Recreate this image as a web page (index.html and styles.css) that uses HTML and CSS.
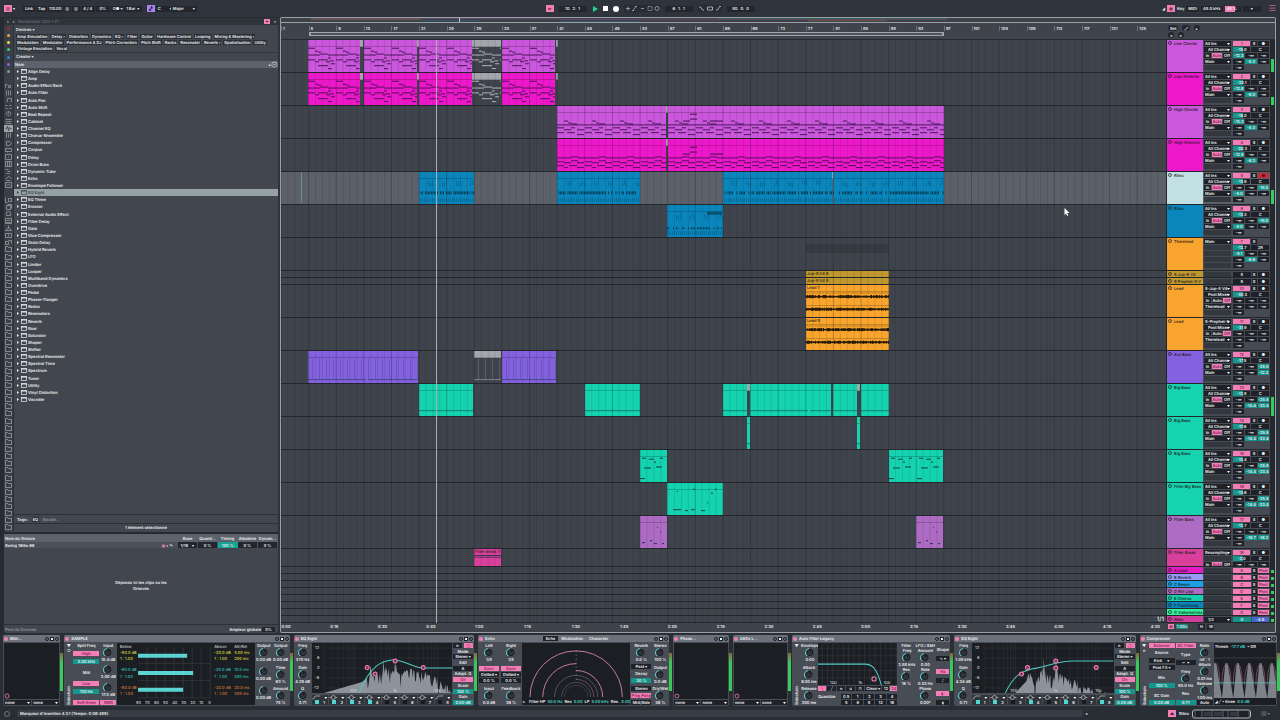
FILE: index.html
```html
<!DOCTYPE html>
<html lang="fr">
<head>
<meta charset="utf-8">
<title>Live Set</title>
<link rel="stylesheet" href="styles.css">
</head>
<body>
<header class="topbar">
  <div class="bar-group start-group">
    <button class="sq pink" aria-label="Panneaux">▥</button><span class="gap-s">▾</span>
    <button class="tb">Link</button><button class="tb">Tap</button>
    <input class="tb w14" value="110.00" aria-label="Tempo">
    <button class="tb">▥</button><button class="tb">▥</button>
    <button class="tb w14">4 / 4</button>
    <button class="tb w14">0%</button>
    <button class="tb w10">O● ▾</button>
    <button class="tb w18">1 Bar &nbsp;▾</button>
    <button class="sq violet gap-m" aria-label="Gamme">▞</button>
    <button class="tb w14 start">C &emsp;&emsp;▾</button>
    <button class="tb w26 start">Major &emsp;&emsp;▾</button>
  </div>
  <div class="bar-group center">
    <button class="sq pink" aria-label="Suivre">◂▪</button>
    <input class="tb w28" value="10.  2.  1" aria-label="Position">
    <button class="icon-btn" aria-label="Lecture"><svg width="6" height="6"><path d="M1 0L6 3L1 6Z" fill="#1ed38c"/></svg></button>
    <button class="icon-btn" aria-label="Stop"><svg width="5" height="5"><rect width="5" height="5" fill="#fff"/></svg></button>
    <button class="icon-btn" aria-label="Enregistrer"><svg width="6" height="6"><circle cx="3" cy="3" r="3" fill="#fff"/></svg></button>
    <span class="icons"><svg width="36" height="7" viewBox="0 0 36 7" fill="none" stroke="#a9adb3" stroke-width=".8"><path d="M2 3.500h4M4 1.500v4M9 5.500l3-4M8 5.500h2M11 1.500h2M17 3.500h3"/><path d="M24 1.500h4v4h-4z" stroke-dasharray="1.500 .8"/><circle cx="33" cy="3.500" r="2"/></svg></span>
    <input class="tb w28" value="6.  1.  1" aria-label="Début de boucle">
    <span class="icons"><svg width="24" height="7" viewBox="0 0 24 7" fill="none" stroke="#c8cbd0" stroke-width=".8"><path d="M1 2h1.500l2 3H6M9.500 2h5v3h-5zM18 5h1.500l2-3.500H23"/></svg></span>
    <input class="tb w28" value="80.  0.  0" aria-label="Longueur de boucle">
  </div>
  <div class="bar-group end">
    <span>◢</span><button class="sq pink" aria-label="Clavier">▦</button><button class="plain">Key</button>
    <button class="tb">MIDI</button><button class="tb">48.0 kHz</button>
    <button class="tb cpu">48 % &nbsp;</button><button class="tb w18">▾</button>
    <button class="plain menu" aria-label="Menu">☰</button>
  </div>
</header>
<main class="workspace">
  <aside class="sidebar">
    <section class="browser">
      <div class="search"><button class="plain">‹</button><button class="plain">›</button><input type="text" placeholder="Rechercher (Ctrl + F)" aria-label="Rechercher"><button class="sq pink small" aria-label="Filtre">✦</button><button class="plain">▪</button></div>
      <div class="browser-body">
        <nav class="places" id="places" aria-label="Collections"></nav>
        <div class="browser-main">
          <div class="filters">
            <h2>Devices ▾</h2>
            <div class="tags" id="tags"></div>
            <h2 class="creator">Creator ▾</h2>
          </div>
          <div class="list-head"><span>Nom</span><span>▴ ⊖</span></div>
          <ul class="devices-list" id="list"></ul>
          <div class="tagline"><span>Tags :</span><button class="tag">EQ</button><span class="dim">Ajouter...</span></div>
          <div class="selected">1 élément sélectionné</div>
        </div>
      </div>
    </section>
    <section class="groove">
      <table>
        <thead><tr><th>Nom du Groove</th><th class="c-ic"></th><th class="c-md">Base</th><th class="c-md">Quanti...</th><th class="c-md">Timing</th><th class="c-md">Aléatoire</th><th class="c-md">Dynam...</th></tr></thead>
        <tbody><tr><td>Swing 16ths 66</td><td><b class="hot">▣</b> ▪ ↷</td><td class="dark">1/16 &nbsp; &nbsp;▾</td><td class="dark">0 %</td><td class="teal">100 %</td><td class="dark">0 %</td><td class="dark">0 %</td></tr></tbody>
      </table>
      <p>Déposez ici les clips ou les<br>Grooves</p>
      <div class="groove-foot"><span class="dim">Pool de Grooves</span><label>Ampleur globale <input value="0%"></label></div>
    </section>
  </aside>
  <section class="arrangement">
    <div class="overview" id="overview"></div>
    <div class="arr-grid">
      <div class="ruler" id="ruler"></div>
      <div class="panel-head"><div><button class="tb">Set</button><button class="tb">⤢</button><button class="tb">▴</button></div><div><button class="tb">◂</button><button class="tb">▸</button></div></div>
      <div class="lanes" id="lanes"></div>
      <div class="tracks" id="tracks"></div>
      <div class="times" id="times"></div>
      <div class="panel-foot"><button class="sq pink small" aria-label="Mode">⊞</button><input class="num teal" value="1.00x" aria-label="Zoom"><span></span><button class="tb">H</button><button class="tb">W</button></div>
    </div>
  </section>
</main>
<section class="rack" id="rack"></section>
<footer class="status">
  <span class="ring"></span><span class="message">Marqueur d'insertion 4.3.1 (Tempo: 0:06:489)</span>
  <span class="tri">▸</span><button class="sq pink" aria-label="Piste">▲</button><span class="trk">Ritou</span>
  <svg class="minimap" width="66" height="10" viewBox="0 0 66 10"><rect x=".5" y="1" width="58" height="8" rx="2" fill="#1d2026" stroke="#b5b9be"/><path d="M3 2v6M10 2v6M20 2v6M31 2v6M36 2v6M46 2v6M57 2v6" stroke="#5d636c"/><path d="M12 3h7v4h-7zM22 3h8v4h-8zM38 3h7v4h-7z" fill="#343941"/></svg>
  <span class="dim cpu-bars">|||| ▾</span>
</footer>
<script src="app.js"></script>
</body>
</html>
```

FILE: styles.css
```css
* { box-sizing: border-box; }
body {
  margin: 0; min-height: 100vh; display: flex; flex-direction: column;
  background: #2f333b; color: #eceef0; overflow-x: hidden;
  font: 600 4px/5px Inter, "DejaVu Sans", sans-serif;
  text-rendering: geometricPrecision;
}
button, input, select { font: inherit; color: inherit; border: 0; padding: 0; margin: 0; background: none; border-radius: 0; min-width: 0; text-rendering: inherit; }
select { appearance: none; }
h2, p, ul { margin: 0; padding: 0; font: inherit; }
svg { display: block; }
.dim { color: #8d929a; }

.topbar { height: 17px; display: grid; grid-template-columns: 1fr auto 1fr; align-items: center; padding: 0 4px; }
.bar-group { display: flex; align-items: center; gap: 2px; white-space: pre; }
.bar-group.start-group { gap: 1px; }
.bar-group.center { margin-left: 20px; gap: 5px; }
.bar-group.end { justify-content: flex-end; }
.tb { background: #23262d; height: 6px; padding: 0 2px; text-align: center; line-height: 6px; }
input.tb { padding: 0; }
.start { text-align: left; }
.w10 { width: 12px; } .w14 { width: 14px; } .w18 { width: 18px; } .w26 { width: 26px; } .w28 { width: 28px; }
.sq { width: 8px; height: 7px; line-height: 7px; text-align: center; color: #4a1c36; }
.small { width: 6px; height: 5px; line-height: 5px; }
.pink { background: #f47fb6; color: #30202b; }
.violet { background: #a884ee; color: #2a1d4a; }
.gap-s { width: 9px; } .gap-m { margin-left: 4px; }
.icons { background: #282c33; }
.cpu { background: linear-gradient(90deg, #f47fb6 60%, #23262d 60%); }
.menu { color: #c86496; font-size: 8px; margin-left: 6px; }

.workspace { flex: 1; display: grid; grid-template-columns: 278px minmax(0, 1fr); gap: 2px; padding: 0 4px 0 0; }
.sidebar { display: flex; flex-direction: column; padding: 1px 0 0 4px; gap: 2px; background: #262a31; }
.browser { flex: 1; background: #42474f; border-radius: 2px; display: flex; flex-direction: column; }
.search { height: 7px; display: flex; align-items: center; gap: 4px; padding: 0 2px 0 3px; background: #2f343b; }
.search input { flex: 1; }
.search input::placeholder { color: #666c75; }
.browser-body { flex: 1; display: flex; }
.places { width: 10px; height: 506px; display: grid; grid-auto-rows: 1fr; justify-items: center; align-items: center; background: #3a3f47; border-right: 1px solid #2b2f36; }
.places button { width: 9px; height: 7px; display: grid; place-items: center; color: #a3a8ae; }
.places .on { background: #99a5a6; color: #22272c; }
.dot { width: 3px; height: 3px; border-radius: 50%; }
.browser-main { flex: 1; display: flex; flex-direction: column; }
.filters { height: 36px; padding: 2px 1px 0 2px; }
.filters .creator { border-top: 1px solid #30353c; margin-top: 1px; padding-top: 1px; }
.tags { display: grid; gap: 1px; padding-top: 2px; }
.tags div { display: flex; gap: 2px; }
.tag { background: #2b2f36; height: 5px; padding: 0 1px; line-height: 5px; white-space: nowrap; }
.list-head { height: 7px; display: flex; justify-content: space-between; background: #5d636d; padding: 1px; }
.devices-list { list-style: none; height: 335px; display: grid; grid-auto-rows: 1fr; }
.devices-list li { display: flex; align-items: center; gap: 1px; padding-left: 3px; }
.devices-list .sel { background: #95a1a2; color: #414a50; }
.tagline { margin-top: auto; height: 9px; display: flex; align-items: center; gap: 3px; border-top: 1px solid #2c3037; padding-left: 3px; }
.selected { height: 9px; border-top: 1px solid #2c3037; text-align: center; line-height: 8px; }
.groove { height: 99px; background: #42474f; border-radius: 2px; display: flex; flex-direction: column; }
.groove table { width: 100%; border-collapse: collapse; table-layout: fixed; }
.groove th { background: #5d636d; height: 8px; text-align: left; padding: 0 1px; font-weight: inherit; }
.groove td { height: 6px; padding: 0 1px; background: #4b5059; }
.groove .c-ic { width: 17px; } .groove .c-md { width: 20px; text-align: center; }
.groove td.dark { background: #23272d; text-align: center; border-right: 1px solid #4b5059; }
.groove td.teal { background: #16a394; text-align: center; }
.hot { color: #f47fb6; }
.groove p { margin: auto; text-align: center; line-height: 6px; }
.groove-foot { height: 9px; display: flex; justify-content: space-between; align-items: center; padding: 0 3px 0 1px; border-top: 1px solid #2c3037; }
.groove-foot input { width: 13px; background: #23272d; text-align: center; }

.arrangement { border: 1px solid #9a9fa6; border-top: 0; border-radius: 2px; background: #3d4249; min-width: 0; }
.overview { height: 6px; border: 1px solid #9a9fa6; border-width: 1px 0; background: #3d4249; position: relative; }
.overview i { position: absolute; height: 1px; opacity: .25; }
.overview b { position: absolute; left: 0; width: 18%; height: 4px; border-right: 1px solid #cfd2d6; }
.arr-grid { display: grid; grid-template-columns: minmax(0, 1fr) 109px; }
.ruler { height: 17px; position: relative; background: #3f444c; border-bottom: 1px solid #272a30; }
.ruler span { position: absolute; top: 3px; padding-left: 1px; border-left: 1px solid #6d727a; }
.loop { position: absolute; top: 9px; height: 4px; border: 1px solid #a0a5ab; border-width: 1px 2px; background: #50555d; }
.panel-head { padding: 2px 0 0; height: 17px; display: grid; gap: 1px; align-content: start; background: #3f444c; border-bottom: 1px solid #272a30; }
.panel-head div { display: flex; gap: 4px; padding-left: 2px; }
.panel-head .tb { border-radius: 3px; line-height: 5px; }
.lanes { position: relative; overflow: hidden; background: #3f444c; }
.lane { position: relative; border-bottom: 1px solid #23262b; }
.lane.sel { background: #5b6069; }
.clip { position: absolute; top: 0; height: 100%; overflow: hidden; }
.clip::before { content: ""; position: absolute; top: 0; left: 0; right: 0; height: 6px; background: var(--head, transparent); border-bottom: 1px solid #00000030; }
.clip svg { width: 100%; height: 100%; position: absolute; }
.clip span { position: relative; display: block; padding-left: 1px; color: #332813; white-space: nowrap; font-weight: 500; }
.clip.flat::before { display: none; }
.grid-lines { position: absolute; inset: 0; width: 100%; height: 100%; pointer-events: none; }
.playhead { position: absolute; top: 0; bottom: 0; width: 1px; background: #a9adb2; }
.insert { position: absolute; width: 1px; height: 31px; background: #6d9ba3; }
.ghost { position: absolute; height: 9px; background: #363a41; }
.pointer { position: absolute; }
.ratio { position: absolute; right: 2px; bottom: 1px; font-size: 6px; font-weight: 500; }
.h33 { height: 33px; } .h18 { height: 18px; } .h7 { height: 7px; }
.track { display: grid; grid-template-columns: 37px 28px minmax(0, 1fr) 5px; border-bottom: 1px solid #23262b; background: #464b53; overflow: hidden; }
.track.sel { background: #5b6069; }
.track-name { padding: 1px; color: #1f1b24; white-space: nowrap; overflow: hidden; display: flex; gap: 2px; font-weight: 500; border-left: 1px solid #23262b; }
.fold { width: 4px; height: 4px; border: 1px solid currentColor; border-radius: 50%; flex: none; opacity: .7; }
.io { display: grid; grid-auto-rows: 5px; gap: 1px; padding: 1px 0 0 1px; overflow: hidden; }
.io select, .io i, .plug-foot select { background: #1e2127 url("data:image/svg+xml,%3Csvg xmlns='http://www.w3.org/2000/svg' width='4' height='4'%3E%3Cpath d='M0 1h3L1.500 3z' fill='%23fff'/%3E%3C/svg%3E") right center no-repeat; height: 5px; line-height: 5px; padding-left: 1px; width: 100%; overflow: hidden; }
.io i { background: #33373e; }
.io .sub { padding-left: 4px; }
.mon { display: grid; grid-template-columns: 7px 10px 8px; gap: 1px; }
.mon button { background: #1e2127; height: 5px; line-height: 5px; }
.mon .pink, .cell.pink { background: #f47fb6; color: #7c2a58; }
.mix { display: grid; grid-template-columns: repeat(6, 1fr); grid-auto-rows: 5px; gap: 1px; padding: 1px 1px 0 2px; }
.cell { background: #1e2127; height: 5px; line-height: 5px; text-align: center; grid-column: span 2; width: 100%; }
.cell.s3 { grid-column: span 3; } .cell.s1 { grid-column: span 1; }
.cell.t { background: linear-gradient(90deg, #14968d 60%, #1e2127 60%); }
.cell.tt { background: #14968d; }
.cell.rec { background: #c42b38; color: #521016; }
.cell.blue { background: #4767c9; }
.meter { background: #25292f; display: flex; align-items: flex-end; }
.meter i { width: 3px; background: #32cd5d; margin-left: 1px; }
.times { height: 8px; position: relative; background: #3f444c; }
.times span { position: absolute; top: 1px; transform: translateX(-50%); }
.panel-foot { display: grid; grid-template-columns: 6px 12px 6px 7px 7px; gap: 2px; padding: 1px 2px; }
.num { background: #1e2127; width: 100%; height: 5px; text-align: center; }
.num.teal { background: #16877f; }

.rack { display: flex; gap: 4px; padding: 2px 3px 1px 3px; height: 74px; background: #292d34; }
.device { position: relative; flex-grow: 1; flex-shrink: 1; min-width: 0; background: #474c55; border-radius: 2px; display: flex; flex-direction: column; }
.device > header { height: 7px; display: flex; align-items: center; gap: 2px; padding: 0 1px; background: #6b717b; border-radius: 2px 2px 0 0; white-space: nowrap; }
.on-dot { width: 4px; height: 4px; border-radius: 50%; background: #f47fb6; }
.header-icons { margin-left: auto; display: flex; gap: 1px; }
.header-icons i { width: 4px; height: 4px; border: 1px solid #1d2025; border-radius: 50%; }
.header-icons i:nth-child(2) { background: #f2f2f2; border-radius: 0; }
.dev-meter { position: absolute; right: -3px; top: 18px; height: 38px; width: 3px; background: linear-gradient(#8a6540, #3ac85c 25%); }
.body { flex: 1; display: flex; min-height: 0; gap: 1px; padding: 1px; }
.col { display: flex; flex-direction: column; align-items: center; flex: none; white-space: nowrap; }
.col.between { justify-content: space-between; }
.w8 { width: 7px; } .w16 { width: 16px; } .w24 { width: 26px; } .w22 { width: 20px; } .w12 { width: 13px; }
.knob { display: grid; justify-items: center; text-align: center; white-space: nowrap; width: 100%; }
.screen { background: #1b1e22; flex: 1; min-width: 0; display: flex; flex-direction: column; }
.screen svg { width: 100%; flex: 1; min-height: 0; }
.screen text { font: 500 4px Inter, sans-serif; fill: #c7cacf; }
.bt { background: #1e2127; width: 100%; height: 5px; line-height: 5px; text-align: center; white-space: nowrap; }
.bt.pink { background: #f47fb6; color: #8a2860; }
.bt.teal { background: #14968d; }
.bands { display: grid; grid-template-columns: repeat(8, 1fr); gap: 1px; background: #474c55; padding-top: 2px; }
.band { background: #30343b; display: grid; justify-items: center; }
.band label { display: flex; gap: 4px; }
.band input, .tick { appearance: none; width: 4px; height: 4px; background: #17191d; }
.band input:checked, .tick:checked { background: #4ed7d1; }
.plug-foot { display: grid; grid-template-columns: 1fr 1fr; gap: 1px; }
.plug { flex-direction: column; }
.stack { display: flex; flex-direction: column; flex: 1; min-width: 0; gap: 1px; }
.side { writing-mode: vertical-rl; rotate: 180deg; margin-top: auto; }
.quant { display: grid; grid-template-columns: 22px repeat(5, 1fr); gap: 1px; margin-top: 2px; }
.modes { display: grid; grid-template-columns: repeat(5, 1fr) 16px 7px 7px; gap: 1px; }
.tabs { margin-left: 46px; display: flex; }
.tabs button { padding: 0 3px; height: 5px; }
.tabs .act { background: #1e2127; }
.two { display: grid; grid-template-columns: 1fr 1fr; gap: 1px 2px; }
.full { width: 100%; }
.pair { width: 42px; }
.filterline { display: flex; gap: 2px; padding: 1px; white-space: nowrap; overflow: hidden; }
.filterline em { color: #48d5cd; font-style: normal; }

.status { height: 13px; display: flex; align-items: center; gap: 3px; padding: 0 5px 0 4px; background: #292d34; }
.ring { width: 6px; height: 6px; border: 1px solid #71767e; border-radius: 50%; margin-right: 4px; }
.message { background: #383d45; flex: 1; padding: 1px 3px; border-radius: 2px; }
.tri { width: 79px; }
.trk { width: 10px; }
.cpu-bars { width: 14px; }
```

FILE: app.js
```js
const $ = id => document.getElementById(id);
let seed = 7;
const rnd = () => (seed = (seed * 16807) % 2147483647) / 2147483647;
const W = 885;
const pct = v => (v / W * 100).toFixed(3) + '%';

/* ---- browser ---- */
const tagRows = [
  ['Amp Simulation', 'Delay ›', 'Distortion', 'Dynamics', 'EQ ›', 'Filter', 'Guitar', 'Hardware Control', 'Looping', 'Mixing & Mastering ›'],
  ['Modulation', 'Modulator', 'Performance & DJ', 'Pitch Correction', 'Pitch Shift', 'Racks', 'Resonator', 'Reverb ›', 'Spatialisation', 'Utility'],
  ['Vintage Emulation', 'Vocal']
];
$('tags').innerHTML = tagRows.map(row => `<div>${row.map(t => `<button class="tag">${t}</button>`).join('')}</div>`).join('');
const names = 'Align Delay,Amp,Audio Effect Rack,Auto Filter,Auto Pan,Auto Shift,Beat Repeat,Cabinet,Channel EQ,Chorus-Ensemble,Compressor,Corpus,Delay,Drum Buss,Dynamic Tube,Echo,Envelope Follower,EQ Eight,EQ Three,Erosion,External Audio Effect,Filter Delay,Gate,Glue Compressor,Grain Delay,Hybrid Reverb,LFO,Limiter,Looper,Multiband Dynamics,Overdrive,Pedal,Phaser-Flanger,Redux,Resonators,Reverb,Roar,Saturator,Shaper,Shifter,Spectral Resonator,Spectral Time,Spectrum,Tuner,Utility,Vinyl Distortion,Vocoder'.split(',');
$('list').innerHTML = names.map(n => `<li class="${n === 'EQ Eight' ? 'sel' : ''}"><svg width="10" height="5" viewBox="0 0 10 5"><path d="M0 1l2 1.500L0 4z" fill="currentColor"/><rect x="4.400" y=".5" width="5" height="4" fill="none" stroke="currentColor" stroke-width=".7"/><path d="M4 1h6" stroke="currentColor"/></svg>${n}</li>`).join('');
const dots = ['#a3293c', '#f0a137', '#eee34f', '#2fd07d', '#2b86cf', '#8a5fe0', '#8d929a'];
const glyphs = ['M0 4V1h2M3 2h2v2H3z', 'M1 0v5M3 0v5M5 0v5', 'M1 4h1V1h4v3H5', 'M0 1h2M4 1h2M0 4h2M4 4h2', 'M3 0a2 2 0 1 0 .1 0M3 0v2', 'M0 1h6M0 3h6M0 5h6', 'M0 3h1l1-2 1 4 1-3 1 1h1', 'M1 0v5M3 1v4M5 0v5', 'M1 1h3l2 2-2 2H1z', 'M0 1h6v3H0zM2 4v1', 'M0 0h6v5H0zM3 2v1', 'M0 0h6v5H0zM2 0v5M4 0v5', 'M0 1h3M2 3h3M1 5h3', 'M0 4l3-3 3 2M1 5h4', 'M0 0h6v5H0zM1 3l2-1 2 1', '', 'M0 0v5h2M3 1h3v3H3z', 'M1 1h4v4H1zM2 0h4v4', 'M1 4a2 2 0 0 1 0-2 2 2 0 0 1 4 0v2z', 'M0 0h6v5H0zM1 2h4M1 4h4', 'M3 0v3M0 5l3-3 3 3z', 'M0 1h6v4H0zM3 2v2', 'M0 5V2h3v3zM3 1h3v3'];
$('places').innerHTML = Array.from({ length: 71 }, (_, i) => {
  if (i < 7) return `<span class="dot" style="background:${dots[i]}"></span>`;
  if (i === 7 || i === 23) return '<span></span>';
  const d = i < 31 ? glyphs[i - 8] || '' : 'M0 5V0h2l1 1h3v4z';
  return `<button class="${i === 14 ? 'on' : ''}" aria-label="Emplacement ${i - 7}"><svg width="7" height="6" viewBox="-.5 -.5 7 6"><path d="${d}" fill="none" stroke="currentColor" stroke-width=".7"/></svg></button>`;
}).join('');

/* ---- rulers ---- */
const bar = b => (b - 1) * 6.905;
let r = '';
for (let b = 1; b < 128; b += 4) r += `<span style="left:${pct(bar(b))}">${b}</span>`;
$('ruler').innerHTML = r + `<div class="loop" style="left:${pct(bar(5))};width:${pct(bar(93))}"></div>`;
let t = '';
for (let i = 0; i < 19; i++) t += `<span style="left:${pct(5 + i * 48.3)}">${Math.floor(i / 4)}:${String(i % 4 * 15).padStart(2, '0')}</span>`;
$('times').innerHTML = t;
$('overview').innerHTML = '<b></b>' + [[3, 28, '#c860d8'], [28, 67, '#d850c0'], [14, 20, '#1288bd'], [28, 36, '#1288bd'], [44, 67, '#1fbf9d'], [3, 14, '#e0aa50'], [53, 61, '#f0a137']].map((o, i) => `<i style="left:${o[0]}%;width:${o[1] - o[0]}%;top:${i % 4}px;background:${o[2]}"></i>`).join('');

/* ---- tracks: name, colour, row class, mixer data ---- */
const P = '#ca57dc', M = '#ee18cb', B = '#0b86bd', O = '#f8a42d', G = '#14d3ae', V = '#ae6bc3', Y = '#c0982d';
const N = '-∞';
const tracks = [
  ['Low Chords', P, 33, '1', '-15.0', ['-12.3', N, N, N, '-5.3', N], 13],
  ['Low Stretchs', M, 33, '2', '-20.1', ['-12.8', N, N, N, '-6.0', N], 8],
  ['High Chords', P, 33, '3', '-15.0', ['-12.3', N, N, N, '-5.3', N], 0],
  ['High Stretchs', M, 33, '4', '-20.3', ['-12.8', N, N, N, '-6.3', N], 0],
  ['Ritou', '#c2e0e3', 33, '5', '-13.9', [N, N, '-18.0', '-8.0', N, N], 14],
  ['Ritou', B, 33, '6', '-13.3', [N, N, '-18.0', '-8.0', N, N], 0],
  ['Therelead', O, 33, '7', '-12.7', ['-9.1', N, N, N, '-6.6', N], 0],
  ['8 Jup-8 V4', Y, 7, '8'], ['9 Prophet-5 V', Y, 7, '9'],
  ['Lead', O, 33, '10', '-30.3', [N, N, N, N, N, N], 0, '8-Jup-8 V4'],
  ['Lead', O, 33, '11', '-31.9', [N, N, N, N, N, N], 0, '9-Prophet-5'],
  ['Arp Bass', '#8461de', 33, '12', '-17.5', [N, N, '-25.8', N, N, '-12.2'], 0],
  ['Big Bass', G, 33, '13', '-12.8', [N, N, '-25.8', N, '-14.4', '-23.4'], 19],
  ['Big Bass', G, 33, '14', '-17.6', [N, N, '-25.8', N, '-14.4', '-23.4'], 0],
  ['Big Bass', G, 33, '15', '-13.4', [N, N, '-25.8', N, '-14.4', '-23.4'], 0],
  ['Filter Big Bass', G, 33, '16', '-13.6', [N, N, '-25.8', N, '-14.4', '-23.4'], 0],
  ['Filter Bass', V, 33, '17', '-12.7', [N, N, N, N, '-16.7', '-16.2'], 0],
  ['Filter Break', '#d8409b', 18, '18', '-2.0', [N, N, N], 0, 'Resampling'],
  ['A Lead', '#e51bc6', 7, 'A'], ['B Reverb', '#989af6', 7, 'B'], ['C Reson', '#1ba0e6', 7, 'C'], ['D RVI Lisp', V, 7, 'D'],
  ['E Chorus', G, 7, 'E'], ['F FrontComp', B, 7, 'F'], ['G ValhallaVinta', '#31f49a', 7, 'G'], ['Main', '#cf3f99', 7, 'M']
];
const sel = (v, c = '') => `<select class="${c}" aria-label="${v}"><option>${v}</option></select>`;
const inp = (v, c) => `<input class="cell ${c}" value="${v}" aria-label="Valeur ${v}">`;
$('tracks').innerHTML = tracks.map((k, i) => {
  const [name, col, h, num, vol, sends, lvl, src] = k;
  let io = '', mix = '';
  if (h === 7) {
    const ret = /[A-G]/.test(num);
    if (num === 'M') { io = sel('1/2', 'sub'); mix = inp('0', 's3 tt') + inp('-4.9', 's3 blue'); }
    else { io = '<i></i>'; mix = `<button class="cell s3 ${ret ? 'pink' : ''}">${num}</button><button class="cell s1">S</button><button class="cell ${ret ? 'pink' : ''}">${ret ? 'Post' : '●'}</button>`; }
  } else {
    const group = num === '7', lead = name === 'Lead';
    const mon = `<div class="mon"><button>In</button><button class="${lead ? '' : 'pink'}">Auto</button><button class="${lead ? 'pink' : ''}">Off</button></div>`;
    io = group ? sel('Main') + '<i></i><i></i><i></i><i></i>' : sel(src || 'All Ins') + (h === 18 ? '<i></i>' : sel(lead ? 'Post Mixer' : 'All Channe', 'sub')) + mon + sel(lead ? 'Therelead' : 'Main') + '<i></i>';
    mix = `<button class="cell s3 pink">${num}</button><button class="cell s1">S</button>` + (group ? '<span></span><span></span>' : `<button class="cell ${i === 4 ? 'rec' : ''}">●</button>`) + inp(vol, 's3 t') + inp(group ? '2R' : 'C', 's3') + sends.map(s => inp(s, s === N ? '' : 'tt')).join('') + (h === 33 ? inp(N, '') : '');
  }
  return `<div class="track h${h} ${i === 4 ? 'sel' : ''}"><div class="track-name" style="background:${col}"><i class="fold"></i>${name}</div><div class="io">${io}</div><div class="mix">${mix}</div><div class="meter"><i style="height:${h === 7 && i > 17 ? 3 : lvl || 0}px"></i></div></div>`;
}).join('');

/* ---- clips ---- */
const pats = {
  low: [28, [[0, 8, 7], [7, 11, 3], [10, 12, 3], [12, 14, 8], [0, 15, 12], [20, 15, 8], [0, 20, 7], [10, 20, 10], [20, 18, 3], [22, 21, 4], [7, 22, 4], [18, 22, 4], [10, 26, 10], [23, 24, 4], [20, 29, 4]]],
  high: [28, [[0, 19, 28], [7, 15, 4], [11, 17, 3], [14, 18, 6], [0, 22, 7], [7, 24, 7], [0, 27, 7], [14, 22, 4], [20, 24, 7], [10, 27, 8], [20, 29, 7]]],
  high2: [28, [[0, 19, 14], [14, 18, 7], [21, 19, 7], [0, 23, 7], [7, 24, 7], [14, 22, 7], [0, 27, 7], [7, 29, 4], [12, 27, 8], [20, 24, 7], [20, 29, 7]]],
  bass: [28, [[2, 8, 4], [9, 9, 5], [14, 12, 2], [20, 8, 3], [16, 17, 6], [4, 18, 7], [0, 29, 5]]],
  fbig: [56, [[6, 27, 8], [18, 28, 3], [24, 27, 4], [34, 28, 4], [40, 20, 1], [44, 10, 2], [48, 6, 2], [26, 6, 2], [10, 8, 1]]],
  line: [60, [[0, 27, 58]]],
  comb: [60, [[0, 29, 58]]],
  fbass: [28, [[2, 27, 3], [10, 25, 2], [14, 28, 3], [17, 11, 1], [20, 16, 1], [22, 28, 2]]],
  brk: [28, [[0, 12, 28], [0, 13, 28], [0, 16, 28]]]
};
function art(kind, w, ink) {
  let s = '';
  const rect = (x, y, ww, hh = 1, o = 1) => { if (x < w) s += `<rect x="${x}" y="${y}" width="${Math.min(ww, w - x)}" height="${hh}" opacity="${o}"/>`; };
  if (kind === 'drum' || kind === 'fill') {
    for (let x = 0; x < w; x += 1.5) if (rnd() > .25) rect(x, kind === 'drum' ? 20 : 23, 1, kind === 'drum' ? 3 : 2, .8);
    for (let x = 1; x < w; x += 2) { rect(x, 27, .6, 4, .45); if (x % 14 > 7) rect(x, 8 + rnd() * 3, .5, 5, .55); }
    if (kind === 'fill') rect(40, 7, 15, 3, .6);
  } else if (kind === 'audio') {
    for (const y of [12, 25]) { rect(0, y - 4, w, .5, .5); for (let x = 0; x < w; x++) { const h = 1.5 + rnd() * 2; rect(x, y - h / 2, 1, h, 1); } }
  } else if (pats[kind]) {
    const [per, notes] = pats[kind], o = kind === 'line' || kind === 'comb' ? .5 : .9;
    for (let b = 0; b < w; b += per) notes.forEach(n => rect(b + n[0], n[1], n[2], 1, o));
    if (kind === 'comb') for (let x = 4; x < w; x += 7) rect(x, 8, .4, 21, .5);
    if (kind.startsWith('high') && w > 200) [[15, 15, 7], [22, 8, 7], [22, 13, 7], [42, 15, 13]].forEach(n => rect(...n, 1));
  }
  return `<svg viewBox="0 0 ${w} 33" preserveAspectRatio="none" fill="${ink}">${s}</svg>`;
}
const low = [[27.5, 79, 'low'], [79, 82.5, 'm'], [83, 136, 'low'], [136, 138, 'm'], [138, 191.5, 'low'], [191.5, 220.5, 'mlow'], [221, 274.5, 'low'], [274.5, 276.5, 'm']];
const clips = {
  0: low, 1: low,
  2: [[276, 385, 'high'], [385, 387, 'm'], [387, 663, 'high']],
  3: [[276, 385, 'high2'], [385, 387, 'm'], [387, 663, 'high2']],
  4: [[137.5, 193, 'drum'], [276, 359, 'drum'], [442, 551, 'drum'], [551, 552, 'm'], [552, 663, 'drum']],
  5: [[386.5, 442, 'fill']],
  7: [[525, 608, 't', 'Jup-8 V4 8']], 8: [[525, 608, 't', 'Jup-8 V4 8']],
  9: [[525, 608, 'audio', 'Lead 1']], 10: [[525, 608, 'audio', 'Lead 9']],
  11: [[27.5, 137, 'comb'], [193, 220.5, 'mcomb'], [221, 275.5, 'comb']],
  12: [[137.5, 192, 'line'], [304, 359, 'line'], [442, 466, 'line'], [466, 469, 'm'], [469, 550, 'line'], [552, 576, 'line'], [576, 579, 'm'], [580, 608, 'line']],
  13: [[466, 469, 'line'], [576, 579, 'line']],
  14: [[359, 386, 'bass'], [608, 662, 'bass']],
  15: [[386.5, 442, 'fbig']],
  16: [[359, 386, 'fbass'], [635, 662.5, 'fbass']],
  17: [[193, 220.5, 'brk', 'Filter break 3']]
};
const lanes = tracks.map((k, i) => {
  const c = (clips[i] || []).map(([a, b, kind, label]) => {
    const muted = kind[0] === 'm', col = i === 4 ? B : k[1];
    const style = `left:${pct(a)};width:${pct(b - a)};` + (muted ? '--head:#a3a7ab' : `background:${col}`);
    return `<div class="clip ${kind === 't' ? 'flat' : ''}" style="${style}">${art(muted ? kind.slice(1) : kind, b - a, muted ? '#c3c7cb' : i < 4 ? '#3c0f4c' : i === 9 || i === 10 ? '#2a1c08' : '#06303f')}${label ? `<span>${label}</span>` : ''}</div>`;
  }).join('');
  return `<div class="lane h${k[2]} ${i === 4 ? 'sel' : ''}">${c}${i === 4 ? `<i class="insert" style="left:${pct(20)}"></i>` : ''}${i === 6 ? `<i class="ghost" style="left:${pct(525)};width:${pct(83)};top:6px"></i>` : ''}</div>`;
}).join('');
let g = '';
for (let b = 1; b < 129; b++) g += `<line x1="${pct(bar(b))}" x2="${pct(bar(b))}" y1="0" y2="100%" stroke="#15181d" stroke-opacity="${b % 4 === 1 ? .28 : .11}"/>`;
$('lanes').innerHTML = lanes + `<svg class="grid-lines">${g}</svg><i class="playhead" style="left:${pct(155)}"></i><svg class="pointer" style="left:${pct(783)};top:168px" width="6" height="9" viewBox="0 0 6 9"><path d="M.5 0v7l1.500-1.500L3.200 8l1-.5L3.200 5H5.500z" fill="#fff"/></svg><span class="ratio">1/1</span>`;

/* ---- device rack ---- */
const knob = (l, v) => `<div class="knob"><span>${l}</span><svg width="10" height="9" viewBox="0 0 10 9" fill="none"><circle cx="5" cy="4.500" r="3" fill="#33373e" stroke="#17191c"/><path d="M2 8A4.200 4.200 0 0 1 4 .5" stroke="#54cfd0"/><path d="M5 4.500L6.500 1.500" stroke="#15171a"/></svg><span>${v}</span></div>`;
const bt = (v, c = '') => `<button class="bt ${c}">${v}</button>`;
const dev = (grow, title, body, extra = '') => `<article class="device" style="flex-basis:${grow}px"><header><i class="on-dot"></i>${title}${extra}<span class="header-icons"><i></i><i></i><i></i></span></header>${body}<i class="dev-meter"></i></article>`;
const plug = (w, title) => dev(w, title, `<div class="body plug"><div class="screen"><svg viewBox="0 0 54 54" preserveAspectRatio="xMinYMax meet"><circle cx="3" cy="51" r="2" fill="none" stroke="#f47fb6" stroke-width=".8"/></svg></div><div class="plug-foot">${sel('none')}${sel('none')}</div></div>`);
function spectrum(env) {
  let d = `M${env[0][0]} 50`;
  for (let j = 1; j < env.length; j++) {
    const [x0, y0] = env[j - 1], [x1, y1] = env[j];
    for (let x = x0; x < x1; x += .8) { const y = y0 + (y1 - y0) * (x - x0) / (x1 - x0); d += `L${x.toFixed(1)} ${Math.min(50, y + (x > 55 ? rnd() * rnd() * 18 : 0)).toFixed(1)}`; }
  }
  return d + 'L140 50Z';
}
function eq(env, curve, nodes, on, vals) {
  let gl = '';
  [12, 20, 26, 31, 35, 38, 41, 43, 55, 63, 69, 74, 77, 80, 83, 97, 105, 111, 115, 119, 122, 125].forEach(x => gl += `M${x} 0V50`);
  const curves = ['M0 4h1l2-3h5', 'M0 2.500h2a2 2 0 1 0 4 0a2 2 0 1 0-4 0M6 2.500h2'];
  return `<div class="body"><div class="col w16 between">${knob('Freq', vals[0])}${knob('Gain', vals[1])}${knob('Q', vals[2])}</div>
  <div class="screen"><svg viewBox="0 0 140 50" preserveAspectRatio="none"><path d="${gl}M12 5H140M12 15H140M12 25H140M12 35H140M12 45H140" stroke="#33383d" stroke-width=".5"/><path d="${spectrum(env)}" fill="#8e929a"/><path d="${curve}" fill="none" stroke="#4fc9c1"/><text x="3" y="6">12</text><text x="5" y="16">6</text><text x="5" y="26">0</text><text x="3" y="36">-6</text><text x="1" y="46">-12</text><text x="38" y="49">100</text><text x="81" y="49">1k</text><text x="122" y="49">10k</text>${nodes.map(n => `<circle cx="${n[0]}" cy="${n[1]}" r="2" fill="#7c3a60" stroke="#f47fb6"/>`).join('')}</svg>
  <div class="bands">${[1, 2, 3, 4, 5, 6, 7, 8].map(n => `<div class="band"><svg style="height:5px" viewBox="0 0 16 5" fill="none" stroke="#c5c8cc" stroke-width=".7"><path d="${curves[n === 1 || n === 8 ? 0 : 1]}"/><path d="M12 2h3l-1.500 2z" fill="#fff" stroke="none"/></svg><label><input type="checkbox" ${on.includes(n) ? 'checked' : ''}>${n}</label></div>`).join('')}</div></div>
  <div class="col w22 between"><div class="two full">${bt('∩')}${bt('◫', 'pink')}</div>Mode${bt('Stereo ▾')}Edit${bt('A')}Adapt. Q${bt('On', 'pink')}Scale${bt('100 %', 'teal')}Gain${bt('0.00 dB', 'teal')}</div></div>`;
}
const mb = `<div class="body"><div class="col w8"><span>▼</span><span>○</span><span class="side">Sidechain</span></div>
<div class="col w24 between"><span>Split Freq</span>${bt('High', 'pink')}${bt('3.00 kHz', 'teal')}<span></span><span>Mid</span><span></span>${bt('Low', 'pink')}${bt('120 Hz', 'teal')}<span></span>${bt('Soft Knee', 'pink')}</div>
<div class="col w16 between">${knob('Input', '10.4 dB')}${knob('', '2.00 dB')}${knob('', '17.0 dB')}${bt('RMS', 'pink')}</div>
<div class="screen"><svg viewBox="0 0 137 61" preserveAspectRatio="none"><path d="M30 4V54M39 4V54M48 4V54M57 4V54M66 4V54M75 4V54M84 4V54M93 4V54M21 20H93M21 37H93M21 54H93" stroke="#43474c" stroke-width=".5"/><path d="M21 12.500H70M21 29.500H76M21 46H66" stroke="#5bd3d2" stroke-width="4"/>
<g><text x="3" y="5">Below</text><text x="97" y="5">Above</text><text x="117" y="5">Att/Rel</text></g>
${[['#d8d33d', 11, '-80.0 dB', '1 : 1.00', '-20.0 dB', '5.00 ms'], ['#2fbfb0', 28, '-80.0 dB', '1 : 1.00', '-20.0 dB', '10.0 ms'], ['#d07538', 45, '-80.0 dB', '1 : 1.00', '-20.0 dB', '20.0 ms']].map(q => `<g><text style="fill:${q[0]}" x="3" y="${q[1]}">${q[2]}</text><text style="fill:${q[0]}" x="3" y="${q[1] + 6}">${q[3]}</text><text style="fill:${q[0]}" x="97" y="${q[1]}">${q[4]}</text><text style="fill:${q[0]}" x="97" y="${q[1] + 6}">1 : 1.00</text><text style="fill:${q[0]}" x="117" y="${q[1]}">${q[5]}</text><text style="fill:${q[0]}" x="117" y="${q[1] + 6}">200 ms</text></g>`).join('')}
${[80, 70, 60, 50, 40, 30, 20, 10, 0].map((n, i) => `<text x="${19 + i * 9}" y="60">${n}</text>`).join('')}</svg></div>
<div class="col w16 between">${knob('Output', '0.00 dB')}${knob('', '0.00 dB')}${knob('', '0.00 dB')}<span></span></div><div class="col w16 between">${knob('Output', '0.00 dB')}${knob('Time', '63 %')}${knob('Amount', '75 %')}</div></div>`;
const arc = (rad, a, b, c) => `<path d="M${52 + rad * Math.cos(a)} ${55 - rad * Math.sin(a)}A${rad} ${rad} 0 0 1 ${52 + rad * Math.cos(b)} ${55 - rad * Math.sin(b)}" fill="none" stroke="${c}"/>`;
const PI = Math.PI;
const echo = `<div class="body"><div class="col between pair"><div class="two full">${knob('Left', '1/8')}${knob('Right', '1/8')}</div><div class="two full">${bt('Sync', 'pink')}${bt('Sync', 'pink')}${bt('Dotted ▾')}${bt('Dotted ▾')}${bt('0.0 %')}${bt('0.0 %')}</div><div class="two full">${knob('Input', '0.0 dB')}${knob('Feedback', '36 %')}</div></div>
<div class="screen"><svg viewBox="0 0 104 56">${arc(47, PI, 0, '#c4809f')}${arc(34, PI, PI / 2, '#c4809f')}${arc(27, PI / 2, 0, '#c4809f')}${arc(22, PI, 0, '#555')}${arc(18, PI / 2, 0, '#704a60')}${arc(15, PI, 0, '#4b4b50')}${arc(12, PI, 0, '#3c3c40')}<path d="M52 8V38" stroke="#bbb" stroke-width=".7" stroke-dasharray="1 3"/></svg><div class="filterline">▸<input type="checkbox" class="tick" checked aria-label="Filter">Filter HP <em>50.0 Hz</em> Res <em>0.00</em> LP <em>5.00 kHz</em> Res. <em>0.00</em></div></div>
<div class="col w22 between">${knob('Reverb', '0.0 %')}${bt('Post ▾')}Decay${bt('30 %', 'teal')}<span></span>${bt('Stereo')}${bt('Ping Pong', 'pink')}${bt('Mid/Side')}</div><div class="col w16 between">${knob('Stereo', '100 %')}${knob('Output', '0.0 dB')}${knob('Dry/Wet', '36 %')}</div></div>`;
let fg = '';
for (let x = 4; x < 75; x += 5) fg += `M${x} 0V40`;
for (let y = 5; y < 40; y += 7) fg += `M0 ${y}H75`;
const af = `<div class="body"><div class="col w8"><span>▼</span><span class="side">Sidechain</span></div><div class="col w16 between">${knob('Envelope', '0.00')}${knob('Attack', '6.00 ms')}${knob('Release', '200 ms')}</div>
<div class="stack"><div class="screen"><svg viewBox="0 0 75 40" preserveAspectRatio="none"><path d="${fg}" stroke="#3a3f44" stroke-width=".5"/><path d="M0 20H45C54 20 57 30 60 40" fill="none" stroke="#4fc9c1"/><text x="11" y="39">100</text><text x="38" y="39">1k</text><text x="62" y="39">10k</text><circle cx="53" cy="34" r="2" fill="none" stroke="#f47fb6"/></svg></div>
<div class="modes">${bt('╲', 'pink')}${bt('╱')}${bt('∩')}${bt('∪')}${bt('⊓')}${bt('Clean ▾')}${bt('12')}${bt('24', 'pink')}</div><div class="quant"><span>Quantize</span>${['0.5', '1', '2', '3', '4'].map(n => bt(n)).join('')}<span></span>${['5', '6', '8', '12', '16'].map(n => bt(n)).join('')}</div></div>
<div class="col w16">Filter${knob('Freq', '2.88 kHz')}${knob('Res', '16 %')}</div><div class="col w22 between">LFO / S&amp;H${knob('Amount', '0.00')}${knob('Rate', '0.33 Hz')}${knob('Phase', '0.00°')}</div><div class="col w12 between"><span></span>Shape${bt('∿ ▾')}<span></span>${bt('Hz', 'pink')}${bt('♪')}<span></span>${bt('◐', 'pink')}${bt('◖')}</div></div>`;
let waves = '';
for (let i = 0; i < 6; i++) waves += `M${i * 10 - 3} 54L${i * 10} 15H${i * 10 + 2}L${i * 10 + 7} 54Z`;
const comp = `<div class="body"><div class="col w8"><span>▼</span><span>∩</span><span class="side">Sidechain</span></div><div class="col w24 between">${bt('External', 'pink')}Source${bt('Kick &emsp;▾')}${bt('Post FX ▾')}<span></span><span>Mix</span>${bt('100 %', 'teal')}<span></span>SC Gain${bt('0.00 dB', 'teal')}</div>
<div class="col w22 between">${bt('SC Filter', 'pink')}Type${bt('⌐ &nbsp;▾')}${knob('Freq', '80.0 Hz')}Res${bt('0.71', 'teal')}</div><div class="col w16 between">${knob('Ratio', 'inf : 1')}${knob('Attack', '0.01 ms')}${knob('Release', '1.00 ms')}${bt('Auto')}</div>
<div class="screen"><div class="filterline">Thresh <em>-17.7 dB</em> ▪ GR</div><svg viewBox="0 0 55 54" preserveAspectRatio="none"><path d="M0 9H55" stroke="#393d43"/><path d="${waves}" fill="#7d8188"/><path d="M0 15C0 15 5 10 5 40M7 40C7 8 15 8 15 40M17 40C17 8 25 8 25 40M27 40C27 8 35 8 35 40M37 40C37 8 45 8 45 40M47 40C47 8 55 8 55 40" fill="none" stroke="#8d5a74" stroke-width=".7"/><path d="M0 37H55" stroke="#4fc9c1"/></svg><div class="filterline">◢ ╱ ▪ Knee <em>0.0 dB</em></div></div></div>`;
const env1 = [[12, 50], [50, 39], [57, 33], [58, 22], [60, 31], [70, 26], [71, 14], [73, 24], [82, 28], [83, 17], [86, 30], [98, 25], [112, 29], [125, 35], [138, 45], [140, 49]];
const env2 = [[43, 50], [54, 38], [57, 27], [62, 40], [68, 28], [70, 25], [71, 14], [73, 28], [78, 33], [82, 28], [83, 18], [86, 30], [98, 36], [105, 38], [120, 47], [140, 50]];
$('rack').innerHTML =
  plug(57, 'Mini...') +
  dev(225, 'SAMPLE', mb) +
  dev(180, 'EQ Eight', eq(env1, 'M47 50C58 22 70 18 80 17C92 16 99 25 112 25H140', [[55, 24.5], [63, 31], [83, 18], [111, 24.5]], [1, 2, 3, 4], ['378 Hz', '4.29 dB', '0.71'])) +
  dev(191, 'Echo', echo, '<span class="tabs"><button class="act">Echo</button><button>Modulation</button><button>Character</button></span>') +
  plug(55, 'Phase...') + plug(55, 'UADx L...') +
  dev(158, 'Auto Filter Legacy', af) +
  dev(181, 'EQ Eight', eq(env2, 'M33 50C43 29 52 28 59 26C75 24 83 18 100 18H140', [[49, 31], [55, 24.5], [83, 18], [83, 25], [123, 24.5]], [1, 2, 4, 6, 8], ['1.08 kHz', '4.34 dB', '0.71'])) +
  dev(137, 'Compressor', comp);
```
